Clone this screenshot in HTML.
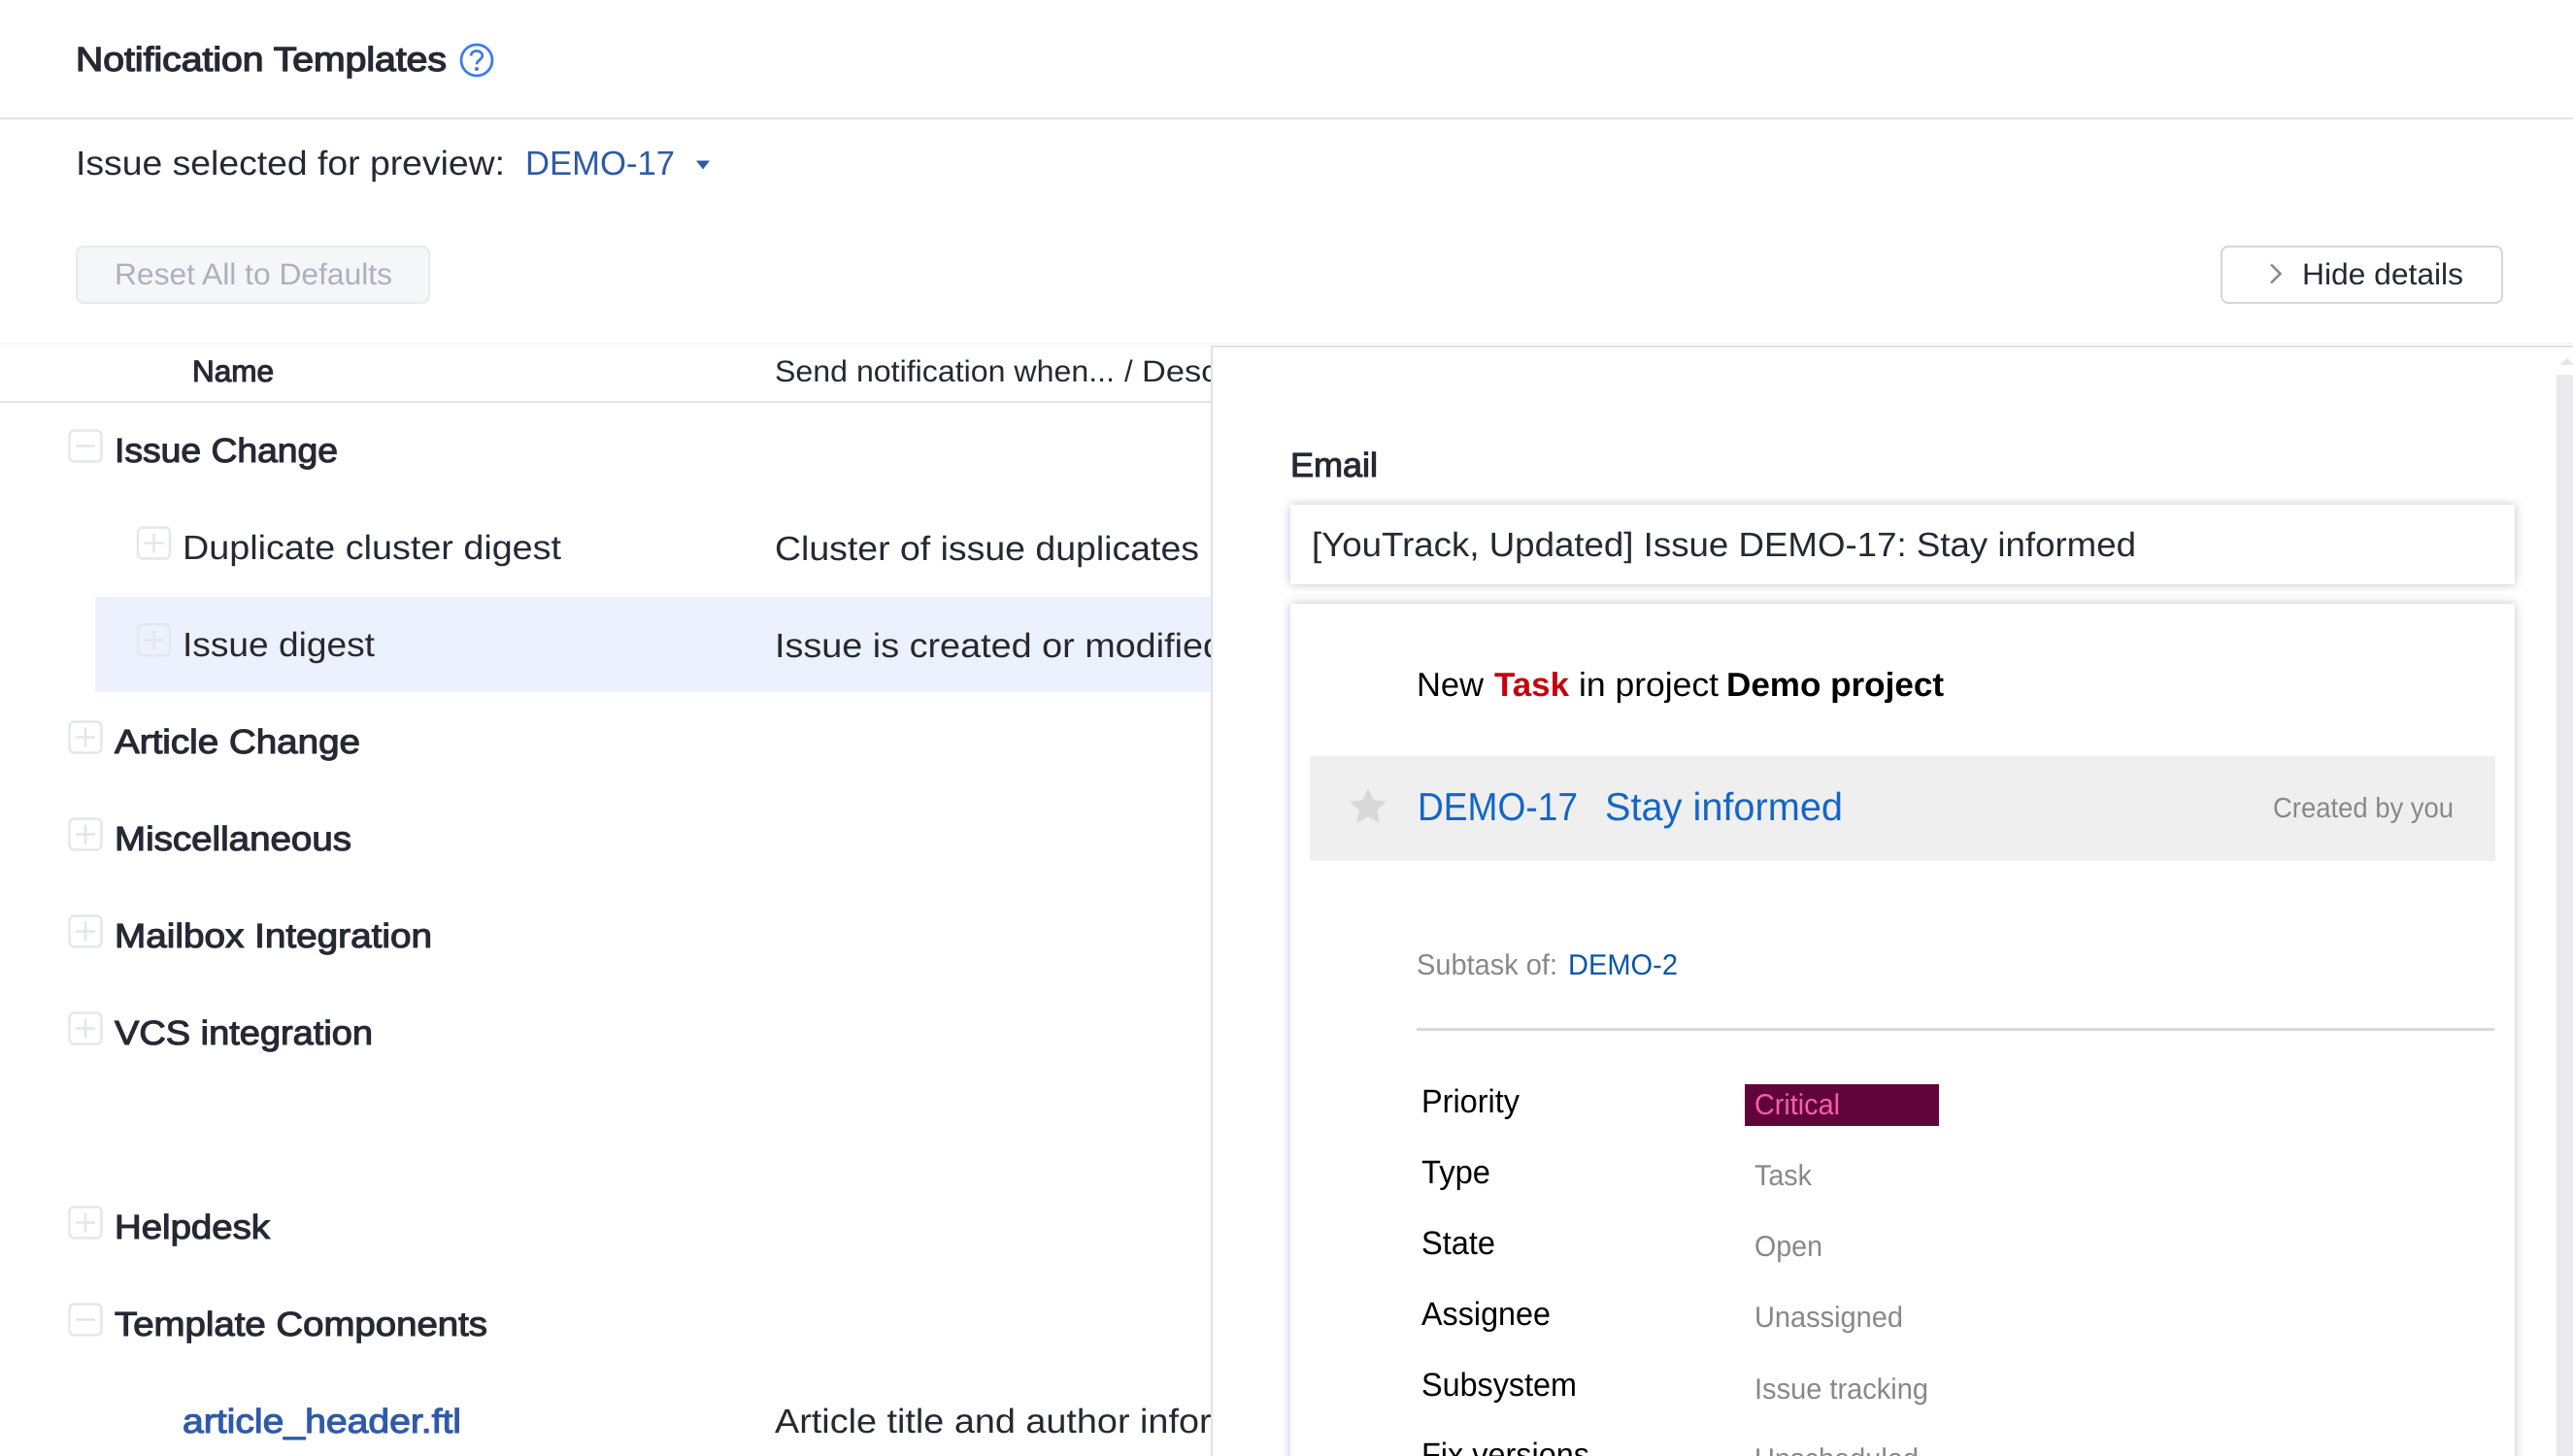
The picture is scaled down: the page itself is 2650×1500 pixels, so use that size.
<!DOCTYPE html>
<html><head><meta charset="utf-8"><style>
html,body{margin:0;padding:0;background:#fff;width:2650px;height:1500px;overflow:hidden}
svg{display:block;position:absolute;left:0;top:0}
text{font-family:"Liberation Sans",sans-serif;font-size:35px;fill:#262933;text-rendering:geometricPrecision}
.m{stroke:#262933;stroke-width:1.1px}
.b{stroke:#262933;stroke-width:1.300px}
.g{fill:#888}
.k{fill:#000;font-size:33.8px}
.box{fill:#fff;stroke:#e6e7eb;stroke-width:2.5}
.l{stroke:#e4e5e9;stroke-width:2.5;fill:none}
</style></head><body>
<svg width="2650" height="1500" viewBox="0 0 2650 1500" xmlns="http://www.w3.org/2000/svg">
<defs>
<clipPath id="c"><rect x="0" y="355" width="1247" height="1145"/></clipPath>
<filter id="s" x="-5%" y="-10%" width="110%" height="120%"><feDropShadow dx="0" dy="0" stdDeviation="5" flood-color="#5a6078" flood-opacity=".38"/></filter>
</defs>

<!-- header -->
<text class="b" x="78" y="73" textLength="382" lengthAdjust="spacingAndGlyphs">Notification Templates</text>
<circle cx="491" cy="62" r="16" fill="none" stroke="#3d7be6" stroke-width="2.8"/>
<path d="M485 57.500c.3-3.300 2.800-5 6-5 3.300 0 5.800 2 5.800 4.900 0 4-5.600 4.300-5.800 8.900" fill="none" stroke="#3d7be6" stroke-width="2.700"/>
<circle cx="491" cy="71" r="2" fill="#3d7be6"/>
<rect x="0" y="121" width="2650" height="2" fill="#dfe0e5"/>

<text x="78" y="180" textLength="442" lengthAdjust="spacingAndGlyphs">Issue selected for preview:</text>
<text x="541" y="180" textLength="154" lengthAdjust="spacingAndGlyphs" style="fill:#2f5aa8">DEMO-17</text>
<path d="M717 165.500h14l-7 9z" fill="#2f5aa8"/>

<rect x="79" y="254" width="363" height="58" rx="7" fill="#f5f6f8" stroke="#e8e9ed" stroke-width="2"/>
<text x="118" y="293" textLength="286" lengthAdjust="spacingAndGlyphs" style="font-size:31px;fill:#adb0be">Reset All to Defaults</text>

<rect x="2288" y="254" width="289" height="58" rx="7" fill="#fff" stroke="#d3d5db" stroke-width="2"/>
<path d="M2339 272.500l9.500 9.500-9.500 9.500" fill="none" stroke="#868997" stroke-width="2.600"/>
<text x="2371" y="293" textLength="166" lengthAdjust="spacingAndGlyphs" style="font-size:31px">Hide details</text>

<rect x="0" y="353" width="2650" height="2" fill="#f6f6f8"/>

<!-- left table -->
<rect x="98" y="615" width="1150" height="98" fill="#ecf2fd"/>
<rect x="0" y="413" width="1248" height="2" fill="#e1e2e7"/>
<text class="m" x="198" y="393" textLength="84" lengthAdjust="spacingAndGlyphs" style="font-size:31px">Name</text>

<g clip-path="url(#c)">
<text x="798" y="393" textLength="350" lengthAdjust="spacingAndGlyphs" style="font-size:31px">Send notification when...</text>
<text x="1158" y="393" style="font-size:31px">/</text>
<text x="1176" y="393" textLength="172" lengthAdjust="spacingAndGlyphs" style="font-size:31px">Description</text>
<text x="798" y="577" textLength="437" lengthAdjust="spacingAndGlyphs">Cluster of issue duplicates</text>
<text x="798" y="677" textLength="462" lengthAdjust="spacingAndGlyphs">Issue is created or modified</text>
<text x="798" y="1476" textLength="563" lengthAdjust="spacingAndGlyphs">Article title and author information</text>
</g>

<!-- tree boxes -->
<g>
<rect class="box" x="71.500" y="443.500" width="33" height="32" rx="5"/><path class="l" d="M78 459.500h20"/>
<rect class="box" x="142" y="543.500" width="33" height="32" rx="5"/><path class="l" d="M148.500 559.500h20M158.500 549.500v20"/>
<rect class="box" x="142" y="643.500" width="33" height="32" rx="5" style="fill:none"/><path class="l" d="M148.500 659.500h20M158.500 649.500v20"/>
<rect class="box" x="71.500" y="743.500" width="33" height="32" rx="5"/><path class="l" d="M78 759.500h20M88 749.500v20"/>
<rect class="box" x="71.500" y="843.500" width="33" height="32" rx="5"/><path class="l" d="M78 859.500h20M88 849.500v20"/>
<rect class="box" x="71.500" y="943.500" width="33" height="32" rx="5"/><path class="l" d="M78 959.500h20M88 949.500v20"/>
<rect class="box" x="71.500" y="1043.500" width="33" height="32" rx="5"/><path class="l" d="M78 1059.500h20M88 1049.500v20"/>
<rect class="box" x="71.500" y="1243.500" width="33" height="32" rx="5"/><path class="l" d="M78 1259.500h20M88 1249.500v20"/>
<rect class="box" x="71.500" y="1343.500" width="33" height="32" rx="5"/><path class="l" d="M78 1359.500h20"/>
</g>

<text class="m" x="118" y="476" textLength="230" lengthAdjust="spacingAndGlyphs">Issue Change</text>
<text x="188" y="576" textLength="390" lengthAdjust="spacingAndGlyphs">Duplicate cluster digest</text>
<text x="188" y="676" textLength="198" lengthAdjust="spacingAndGlyphs">Issue digest</text>
<text class="m" x="118" y="776" textLength="253" lengthAdjust="spacingAndGlyphs">Article Change</text>
<text class="m" x="118" y="876" textLength="244" lengthAdjust="spacingAndGlyphs">Miscellaneous</text>
<text class="m" x="118" y="976" textLength="327" lengthAdjust="spacingAndGlyphs">Mailbox Integration</text>
<text class="m" x="118" y="1076" textLength="266" lengthAdjust="spacingAndGlyphs">VCS integration</text>
<text class="m" x="118" y="1276" textLength="160" lengthAdjust="spacingAndGlyphs">Helpdesk</text>
<text class="m" x="118" y="1376" textLength="384" lengthAdjust="spacingAndGlyphs">Template Components</text>
<text x="188" y="1476" textLength="287" lengthAdjust="spacingAndGlyphs" style="fill:#2f5aa8;stroke:#2f5aa8;stroke-width:1.100px">article_header.ftl</text>

<!-- right panel -->
<rect x="1248" y="356" width="1402" height="1144" fill="#fff"/>
<rect x="1247" y="356" width="2" height="1144" fill="#e1e2e7"/>
<rect x="1247" y="356" width="1403" height="2" fill="#e1e2e7"/>
<rect x="2633" y="386" width="17" height="1114" fill="#e9eaee"/>
<path d="M2636.500 376l7.500-7.500 6 6v1.500z" fill="#e6e7eb"/>

<text class="m" x="1329" y="491" textLength="90" lengthAdjust="spacingAndGlyphs" style="font-size:35px">Email</text>

<rect x="1329" y="520" width="1261" height="82" fill="#fff" filter="url(#s)"/>
<text x="1351" y="573" textLength="849" lengthAdjust="spacingAndGlyphs">[YouTrack, Updated] Issue DEMO-17: Stay informed</text>

<rect x="1329" y="622" width="1261" height="900" fill="#fff" filter="url(#s)"/>
<text class="k" x="1459" y="717" style="font-size:34.500px">New</text>
<text x="1539" y="717" textLength="77" lengthAdjust="spacingAndGlyphs" style="font-size:34.500px;font-weight:bold;fill:#c8000b">Task</text>
<text class="k" x="1626" y="717" textLength="144" lengthAdjust="spacingAndGlyphs" style="font-size:34.500px">in project</text>
<text class="k" x="1778" y="717" textLength="224" lengthAdjust="spacingAndGlyphs" style="font-size:34.500px;font-weight:bold">Demo project</text>

<rect x="1349" y="779" width="1221" height="108" fill="#efefef"/>
<path d="M1409 812l5.700 12.300 13.300 1.500-9.900 9 2.700 13.200-11.800-6.700-11.800 6.700 2.700-13.200-9.900-9 13.300-1.500z" fill="#d8d8d8"/>
<text x="1460" y="845" textLength="165" lengthAdjust="spacingAndGlyphs" style="font-size:40.500px;fill:#1466c8">DEMO-17</text>
<text x="1653" y="845" textLength="245" lengthAdjust="spacingAndGlyphs" style="font-size:40.500px;fill:#1466c8">Stay informed</text>
<text class="g" x="2341" y="842" textLength="186" lengthAdjust="spacingAndGlyphs" style="font-size:29px">Created by you</text>

<text class="g" x="1459" y="1004" textLength="145" lengthAdjust="spacingAndGlyphs" style="font-size:30px">Subtask of:</text>
<text x="1615" y="1004" textLength="113" lengthAdjust="spacingAndGlyphs" style="font-size:30px;fill:#0b56a5">DEMO-2</text>
<rect x="1459" y="1059" width="1110" height="3" fill="#d8d8d8"/>

<text class="k" x="1464" y="1146" textLength="101" lengthAdjust="spacingAndGlyphs">Priority</text>
<rect x="1797" y="1117" width="200" height="43" fill="#61043a"/>
<text x="1807" y="1148" textLength="88" lengthAdjust="spacingAndGlyphs" style="font-size:30px;fill:#f55db0">Critical</text>
<text class="k" x="1464" y="1219" textLength="71" lengthAdjust="spacingAndGlyphs">Type</text>
<text class="g" x="1807" y="1221" textLength="59" lengthAdjust="spacingAndGlyphs" style="font-size:30px">Task</text>
<text class="k" x="1464" y="1292" textLength="76" lengthAdjust="spacingAndGlyphs">State</text>
<text class="g" x="1807" y="1294" textLength="70" lengthAdjust="spacingAndGlyphs" style="font-size:30px">Open</text>
<text class="k" x="1464" y="1365" textLength="133" lengthAdjust="spacingAndGlyphs">Assignee</text>
<text class="g" x="1807" y="1367" textLength="153" lengthAdjust="spacingAndGlyphs" style="font-size:30px">Unassigned</text>
<text class="k" x="1464" y="1438" textLength="160" lengthAdjust="spacingAndGlyphs">Subsystem</text>
<text class="g" x="1807" y="1441" textLength="179" lengthAdjust="spacingAndGlyphs" style="font-size:30px">Issue tracking</text>
<text class="k" x="1464" y="1510" textLength="173" lengthAdjust="spacingAndGlyphs">Fix versions</text>
<text class="g" x="1807" y="1513" textLength="169" lengthAdjust="spacingAndGlyphs" style="font-size:30px">Unscheduled</text>
</svg>
</body></html>
